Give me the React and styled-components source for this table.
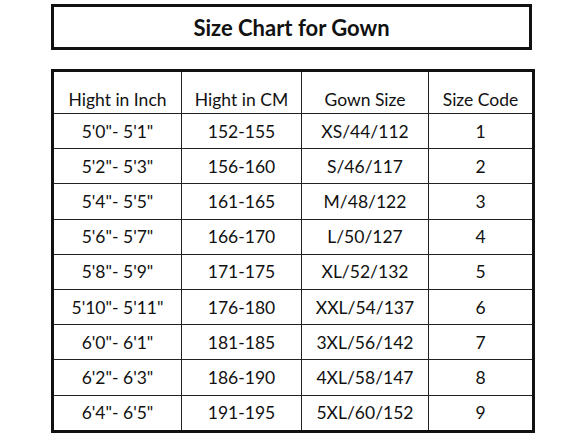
import React from 'react';
import styled, { createGlobalStyle } from 'styled-components';

const GlobalStyle = createGlobalStyle`
  body {
    margin: 0;
    background: #ffffff;
    font-family: Lato, "Open Sans", sans-serif;
    color: #111111;
  }
`;

const Page = styled.div`
  width: 583px;
  height: 437px;
  padding: 4px 0 0 51px;
  box-sizing: border-box;
  overflow: hidden;
`;

const TitleBox = styled.div`
  width: 481px;
  height: 46px;
  box-sizing: border-box;
  border: 3px solid #111111;
  display: flex;
  align-items: center;
  justify-content: center;
`;

const Title = styled.h1`
  margin: 0;
  font-size: 22px;
  font-weight: 700;
  color: #111111;
`;

const Table = styled.table`
  margin-top: 19px;
  width: 481px;
  border-collapse: collapse;
  table-layout: fixed;
  border: 3px solid #111111;
`;

const HeadCell = styled.th`
  height: 38px;
  padding: 0 0 3px 0;
  vertical-align: bottom;
  font-size: 17.5px;
  font-weight: 400;
  border: 1px solid #222222;
`;

const Cell = styled.td`
  height: 34.2px;
  padding: 0;
  text-align: center;
  vertical-align: middle;
  font-size: 17.5px;
  border: 1px solid #222222;
`;

const columns = [
  { label: 'Hight in Inch', width: 129 },
  { label: 'Hight in CM', width: 120 },
  { label: 'Gown Size', width: 127 },
  { label: 'Size Code', width: 105 },
];

const rows = [
  ['5\'0"- 5\'1"', '152-155', 'XS/44/112', '1'],
  ['5\'2"- 5\'3"', '156-160', 'S/46/117', '2'],
  ['5\'4"- 5\'5"', '161-165', 'M/48/122', '3'],
  ['5\'6"- 5\'7"', '166-170', 'L/50/127', '4'],
  ['5\'8"- 5\'9"', '171-175', 'XL/52/132', '5'],
  ['5\'10"- 5\'11"', '176-180', 'XXL/54/137', '6'],
  ['6\'0"- 6\'1"', '181-185', '3XL/56/142', '7'],
  ['6\'2"- 6\'3"', '186-190', '4XL/58/147', '8'],
  ['6\'4"- 6\'5"', '191-195', '5XL/60/152', '9'],
];

const App = () => (
  <>
    <GlobalStyle />
    <Page>
      <TitleBox>
        <Title>Size Chart for Gown</Title>
      </TitleBox>
      <Table>
        <colgroup>
          {columns.map(c => (
            <col key={c.label} style={{ width: c.width }} />
          ))}
        </colgroup>
        <thead>
          <tr>
            {columns.map(c => (
              <HeadCell key={c.label}>{c.label}</HeadCell>
            ))}
          </tr>
        </thead>
        <tbody>
          {rows.map(r => (
            <tr key={r[3]}>
              {r.map((v, i) => (
                <Cell key={i}>{v}</Cell>
              ))}
            </tr>
          ))}
        </tbody>
      </Table>
    </Page>
  </>
);

export default App;
